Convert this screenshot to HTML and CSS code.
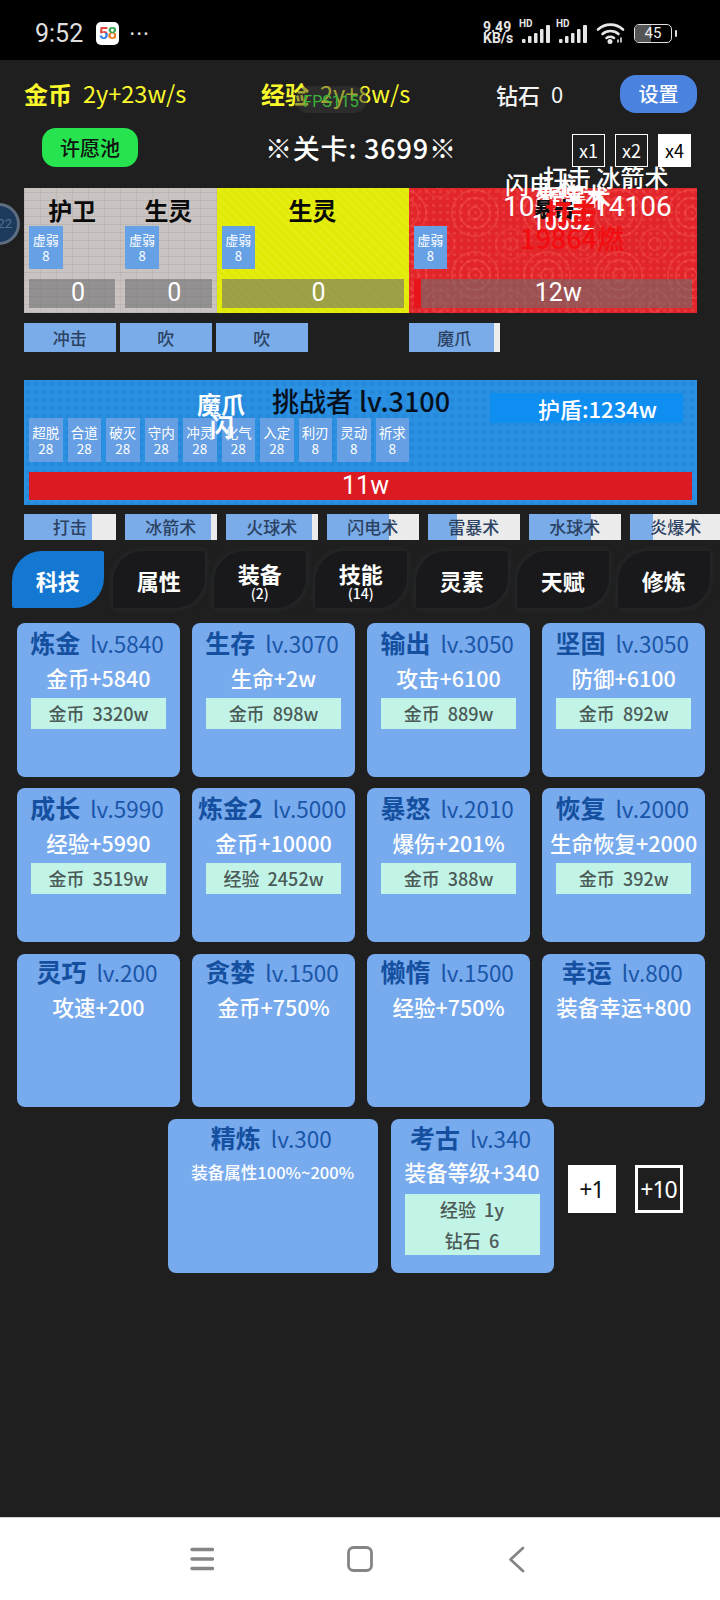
FILE: index.html
```html
<!DOCTYPE html>
<html lang="zh">
<head>
<meta charset="utf-8">
<title>科技</title>
<link rel="stylesheet" href="styles.css">
</head>
<body>
<div class="phone">
  <header class="status">
    <span class="time">9:52</span>
    <span class="app58"><span class="five">5</span><span class="eight">8</span></span>
    <span class="dots">•••</span>
    <span class="net">9.49<br>KB/s</span>
    <span class="sig"><span class="hd">HD</span>
      <svg width="30" height="19" viewBox="0 0 30 19"><g fill="#e6e6e6"><rect x="0" y="14" width="3.5" height="4" rx="1"/><rect x="6" y="11" width="3.5" height="7" rx="1"/><rect x="12" y="8" width="3.5" height="10" rx="1"/><rect x="18" y="4" width="3.5" height="14" rx="1"/><rect x="24" y="0" width="4" height="18" rx="1"/></g></svg>
    </span>
    <span class="sig"><span class="hd">HD</span>
      <svg width="30" height="19" viewBox="0 0 30 19"><g fill="#e6e6e6"><rect x="0" y="14" width="3.5" height="4" rx="1"/><rect x="6" y="11" width="3.5" height="7" rx="1"/><rect x="12" y="8" width="3.5" height="10" rx="1"/><rect x="18" y="4" width="3.5" height="14" rx="1"/><rect x="24" y="0" width="4" height="18" rx="1"/></g></svg>
    </span>
    <svg class="wifi" width="29" height="22" viewBox="0 0 29 22" fill="none" stroke="#e6e6e6" stroke-width="2.6" stroke-linecap="round"><path d="M2 7.5C9 1 20 1 27 7.5"/><path d="M6.5 12C11 8 18 8 22.500 12"/><path d="M10.500 16C12.500 14.500 16 14.500 18 16"/><circle cx="14" cy="19.500" r="1.200" fill="#e6e6e6"/><path d="M22 20v-2M25 20v-4" stroke-width="1.600"/></svg>
    <span class="batt"><span class="batt-fill"></span><span class="batt-num">45</span></span>
    <span class="batt-nub"></span>
  </header>

  <main class="game">
    <div class="res-row">
      <div class="res gold"><b>金币</b><span>2y+23w/s</span></div>
      <div class="res gold"><b>经验</b><span>2y+8w/s</span></div>
      <div class="res gem"><b>钻石</b><span>0</span></div>
      <button class="settings">设置</button>
      <div class="fps">FPS115</div>
    </div>

    <div class="stage-row">
      <button class="wish">许愿池</button>
      <div class="stage">※关卡: 3699※</div>
      <div class="speeds">
        <span class="speed">x1</span><span class="speed">x2</span><span class="speed on">x4</span>
      </div>
    </div>

    <div class="float-ball">22</div>

    <section class="team">
      <div class="zone brick">
        <div class="unit">
          <div class="u-name">护卫</div>
          <div class="buff">虚弱<br>8</div>
          <div class="hp">0</div>
        </div>
        <div class="unit">
          <div class="u-name">生灵</div>
          <div class="buff">虚弱<br>8</div>
          <div class="hp">0</div>
        </div>
      </div>
      <div class="zone lime">
        <div class="unit">
          <div class="u-name">生灵</div>
          <div class="buff">虚弱<br>8</div>
          <div class="hp">0</div>
        </div>
      </div>
      <div class="zone floral">
        <div class="unit">
          <div class="u-name"></div>
          <div class="buff">虚弱<br>8</div>
          <div class="hp hp-red"><i class="hp-sliver"></i><span>12w</span></div>
        </div>
      </div>
      <div class="dmg d1">打击 冰箭术</div>
      <div class="dmg d2">闪电术</div>
      <div class="dmg d3">火球术</div>
      <div class="dmg d4">雷暴术</div>
      <div class="dmg d5">10854</div>
      <div class="dmg d6">14106</div>
      <div class="dmg d8">暴击</div>
      <div class="dmg d7">10652</div>
      <div class="dmg d9">打击</div>
      <div class="dmg d10">19864燃</div>
    </section>

    <div class="team-skills">
      <div class="chip" style="--p:100%">冲击</div>
      <div class="chip" style="--p:100%">吹</div>
      <div class="chip" style="--p:100%">吹</div>
      <div class="chip" style="--p:93%">魔爪</div>
    </div>

    <section class="boss">
      <div class="boss-head">挑战者 lv.3100</div>
      <div class="shield">护盾:1234w</div>
      <div class="boss-buffs">
        <div class="debuff">超脱<br>28</div>
        <div class="debuff">合道<br>28</div>
        <div class="debuff">破灭<br>28</div>
        <div class="debuff">守内<br>28</div>
        <div class="debuff">冲灵<br>28</div>
        <div class="debuff">化气<br>28</div>
        <div class="debuff">入定<br>28</div>
        <div class="debuff">利刃<br>8</div>
        <div class="debuff">灵动<br>8</div>
        <div class="debuff">祈求<br>8</div>
      </div>
      <div class="boss-hp">11w</div>
      <div class="boss-float f1">魔爪</div>
      <div class="boss-float f2">闪</div>
    </section>

    <div class="boss-skills">
      <div class="chip" style="--p:74%">打击</div>
      <div class="chip" style="--p:94%">冰箭术</div>
      <div class="chip" style="--p:94%">火球术</div>
      <div class="chip" style="--p:67%">闪电术</div>
      <div class="chip" style="--p:31%">雷暴术</div>
      <div class="chip" style="--p:67%">水球术</div>
      <div class="chip" style="--p:25%">炎爆术</div>
    </div>

    <nav class="tabs">
      <div class="tab active">科技</div>
      <div class="tab">属性</div>
      <div class="tab">装备<small>(2)</small></div>
      <div class="tab">技能<small>(14)</small></div>
      <div class="tab">灵素</div>
      <div class="tab">天赋</div>
      <div class="tab">修炼</div>
    </nav>

    <section class="cards">
      <article class="card"><h3>炼金<span>lv.5840</span></h3><p>金币+5840</p><div class="cost"><div>金币&nbsp; 3320w</div></div></article>
      <article class="card"><h3>生存<span>lv.3070</span></h3><p>生命+2w</p><div class="cost"><div>金币&nbsp; 898w</div></div></article>
      <article class="card"><h3>输出<span>lv.3050</span></h3><p>攻击+6100</p><div class="cost"><div>金币&nbsp; 889w</div></div></article>
      <article class="card"><h3>坚固<span>lv.3050</span></h3><p>防御+6100</p><div class="cost"><div>金币&nbsp; 892w</div></div></article>

      <article class="card"><h3>成长<span>lv.5990</span></h3><p>经验+5990</p><div class="cost"><div>金币&nbsp; 3519w</div></div></article>
      <article class="card"><h3>炼金2<span>lv.5000</span></h3><p>金币+10000</p><div class="cost"><div>经验&nbsp; 2452w</div></div></article>
      <article class="card"><h3>暴怒<span>lv.2010</span></h3><p>爆伤+201%</p><div class="cost"><div>金币&nbsp; 388w</div></div></article>
      <article class="card"><h3>恢复<span>lv.2000</span></h3><p>生命恢复+2000</p><div class="cost"><div>金币&nbsp; 392w</div></div></article>

      <article class="card high"><h3>灵巧<span>lv.200</span></h3><p>攻速+200</p></article>
      <article class="card high"><h3>贪婪<span>lv.1500</span></h3><p>金币+750%</p></article>
      <article class="card high"><h3>懒惰<span>lv.1500</span></h3><p>经验+750%</p></article>
      <article class="card high"><h3>幸运<span>lv.800</span></h3><p>装备幸运+800</p></article>
    </section>

    <section class="last-row">
      <article class="card high wide"><h3>精炼<span>lv.300</span></h3><p class="small-effect">装备属性100%~200%</p></article>
      <article class="card high narrow"><h3>考古<span>lv.340</span></h3><p>装备等级+340</p><div class="cost tall"><div>经验&nbsp; 1y</div><div>钻石&nbsp; 6</div></div></article>
      <button class="step on">+1</button>
      <button class="step">+10</button>
    </section>
  </main>

  <footer class="navbar">
    <svg class="nav-menu" width="24" height="24" viewBox="0 0 24 24" stroke="#858585" stroke-width="3.400" stroke-linecap="round"><path d="M2 2.500H22.500M2 12H22.500M2 21.500H22.500"/></svg>
    <svg class="nav-home" width="26" height="26" viewBox="0 0 26 26" fill="none" stroke="#858585" stroke-width="2.800"><rect x="1.500" y="1.500" width="23" height="23" rx="5"/></svg>
    <svg class="nav-back" width="17" height="27" viewBox="0 0 17 27" fill="none" stroke="#858585" stroke-width="2.800" stroke-linecap="round" stroke-linejoin="round"><path d="M15 2L2.500 13.500L15 25"/></svg>
  </footer>
</div>
</body>
</html>
```

FILE: styles.css
```css
* { box-sizing: border-box; }
html, body { margin: 0; padding: 0; }
body {
  width: 720px;
  height: 1600px;
  overflow: hidden;
  background: #1f1f1f;
  font-family: "Noto Sans CJK SC", "Noto Sans", sans-serif;
}
.phone { width: 720px; height: 1600px; display: flex; flex-direction: column; overflow: hidden; }

/* status bar */
.status {
  height: 60px;
  flex: none;
  background: #000;
  color: #e4e4e4;
  display: flex;
  align-items: center;
  padding: 6px 0 0 35px;
}
.time { font: 400 25px/1 Roboto, sans-serif; color: #dedede; width: 61px; }
.app58 {
  width: 23px; height: 23px;
  background: #fff;
  border-radius: 5px;
  display: flex; align-items: center; justify-content: center;
  font: 700 17px/1 Roboto, sans-serif;
  letter-spacing: -1px;
}
.five, .eight { -webkit-background-clip: text; background-clip: text; color: transparent; }
.five { background-image: linear-gradient(180deg, #e5483c 0 45%, #2f7fe0 45%); }
.eight { background-image: linear-gradient(180deg, #35a853 0 45%, #ee7a22 45%); }
.dots { font: 400 13px/1 Roboto, sans-serif; letter-spacing: 2.500px; margin-left: 11px; width: 353px; color: #ddd; }
.net { font: 700 14px/11.500px Roboto, sans-serif; width: 36px; color: #e6e6e6; }
.sig { width: 37px; height: 22px; display: block; position: relative; }
.sig svg { display: block; margin: 3px 0 0 3px; }
.hd { position: absolute; left: 0; top: -3px; font: 700 10px/1 Roboto, sans-serif; color: #e6e6e6; }
.wifi { margin-left: 3px; }
.batt {
  margin-left: 9px;
  width: 38px; height: 19px;
  border: 1.500px solid #e0e0e0;
  border-radius: 5px;
  display: flex; align-items: center; justify-content: center;
  position: relative;
  overflow: hidden;
}
.batt-fill { position: absolute; left: 0; top: 0; bottom: 0; width: 45%; background: #555; }
.batt-num { position: relative; font: 400 15px/1 Roboto, sans-serif; color: #eee; }
.batt-nub { width: 2px; height: 7px; background: #ddd; margin-left: 3px; border-radius: 1px; }

/* game area */
.game { flex: 1; position: relative; background: #1f1f1f; }

.res-row {
  position: relative;
  display: grid;
  grid-template-columns: 237px 235px 124px 77px;
  align-items: center;
  height: 38px;
  margin-top: 15px;
  padding-left: 24px;
}
.res { display: flex; align-items: center; white-space: nowrap; }
.res b { font-size: 24px; font-weight: 700; line-height: 38px; }
.res span { font-size: 23.500px; margin-left: 11px; margin-top: -3px; }
.gold { color: #f8f82c; }
.gem { color: #f2f2f2; }
.gem b { font-size: 22px; font-weight: 500; }
.gem span { font-size: 22px; }
.settings {
  height: 38px;
  border: 0;
  border-radius: 16px;
  background: #4a82e0;
  color: #fff;
  font: 500 20px/1 "Noto Sans CJK SC", sans-serif;
  padding: 0;
}
.fps {
  position: absolute;
  left: 295px; top: 11px;
  width: 72px; height: 27px;
  border-radius: 14px;
  background: rgba(60, 60, 60, .45);
  color: #3cb43c;
  font: 400 16px/32px Roboto, sans-serif;
  text-align: center;
}

.stage-row {
  display: grid;
  grid-template-columns: 225px 186px 1fr;
  align-items: center;
  height: 39px;
  margin-top: 14px;
  padding-left: 42px;
}
.wish {
  width: 96px; height: 39px;
  border: 0; padding: 0;
  border-radius: 14px;
  background: #26e34f;
  color: #111;
  font: 500 20px/1 "Noto Sans CJK SC", sans-serif;
}
.stage { color: #fff; font-size: 27px; font-weight: 500; white-space: nowrap; line-height: 41px; letter-spacing: .8px; margin-left: -2px; }
.speeds { display: flex; justify-content: flex-end; gap: 10px; padding-right: 29px; padding-top: 6px; }
.speed {
  width: 33px; height: 33px;
  border: 1.500px solid #fff;
  color: #fff;
  font: 400 18px/30px "Noto Sans CJK SC", sans-serif;
  text-align: center;
}
.speed.on { background: #fff; color: #000; }

.float-ball {
  position: absolute;
  left: -22px; top: 143px;
  width: 42px; height: 42px;
  border-radius: 50%;
  background: #1c3a5c;
  border: 3px solid #5e6e80;
  color: #54708e;
  font: 400 13px/36px Roboto, sans-serif;
  text-align: right;
  padding-right: 5px;
}

/* party */
.team {
  position: relative;
  display: grid;
  grid-template-columns: 192.500px 192px 288.500px;
  height: 125px;
  margin: 22px 0 0 24px;
  width: 673px;
}
.zone { display: flex; }
.brick {
  background:
    repeating-linear-gradient(0deg, rgba(170,165,163,.4) 0 1px, transparent 1px 8px),
    repeating-linear-gradient(90deg, rgba(170,165,163,.3) 0 1px, transparent 1px 16px),
    #c9c4c2;
}
.lime {
  background: repeating-linear-gradient(45deg, #e1e906 0 3px, #e5ed10 3px 6px);
}
.floral {
  background:
    radial-gradient(circle, transparent 0 5px, rgba(255,110,100,.28) 5px 7px, transparent 7px 14px, rgba(255,110,100,.25) 14px 16px, transparent 16px 22px, rgba(255,110,100,.25) 22px 24px, transparent 24px) 30px -6px / 72px 62px,
    radial-gradient(circle, transparent 0 5px, rgba(255,110,100,.2) 5px 7px, transparent 7px 14px, rgba(255,110,100,.18) 14px 16px, transparent 16px) 66px 25px / 72px 62px,
    radial-gradient(circle, rgba(255,120,110,.22) 0 1.500px, transparent 2px) 0 0 / 7px 7px,
    #e2252a;
}
.unit { flex: 1; padding: 0 5px; display: flex; flex-direction: column; min-width: 0; }
.u-name {
  height: 38px;
  padding-top: 4px;
  text-align: center;
  color: #0a0a0a;
  font-size: 24px;
  font-weight: 700;
  line-height: 36px;
}
.buff {
  width: 33.500px; height: 43px;
  background: #66a1e6;
  color: #fff;
  font-size: 13px;
  line-height: 15.500px;
  text-align: center;
  padding-top: 6px;
}
.hp {
  margin-top: 10px;
  height: 28.500px;
  background: rgba(110, 110, 110, .6);
  color: #fff;
  font: 400 25px/28px Roboto, sans-serif;
  text-align: center;
  display: flex;
  justify-content: center;
  padding-left: 12px;
}
.hp-red { justify-content: flex-start; padding-left: 0; }
.hp-red span { flex: 1; padding-left: 4px; }
.hp-sliver { width: 7px; background: #e8141c; flex: none; }

.dmg { position: absolute; white-space: nowrap; font-weight: 500; color: #fff; }
.d1 { left: 519px; top: -29px; font-size: 24px; line-height: 36px; }
.d2 { left: 481px; top: -22px; font-size: 24px; line-height: 36px; }
.d3 { left: 510px; top: -11px; font-size: 24px; line-height: 36px; }
.d4 { left: 515px; top: -9px; font-size: 24px; line-height: 36px; }
.d5 { left: 479px; top: 1px; font: 400 28px/36px Roboto, sans-serif; }
.d6 { left: 569px; top: 1px; font: 400 28px/36px Roboto, sans-serif; }
.d7 { left: 508px; top: 20px; font: 500 22px/30px Roboto, sans-serif; }
.d8 { left: 510px; top: 3px; font-size: 20px; line-height: 36px; font-weight: 900; color: #0c0c0c; }
.d9 { left: 521px; top: 6px; font-size: 26px; line-height: 36px; font-weight: 900; color: #f01212; }
.d10 { left: 496px; top: 33px; font: 500 27px/34px "Noto Sans CJK SC", sans-serif; color: #f20c10; }

/* skill chips */
.team-skills {
  display: grid;
  grid-template-columns: 96px 96px 192.500px 92px;
  height: 29px;
  margin: 10px 0 0 24px;
}
.chip {
  width: 91.600px;
  flex: none;
  background: linear-gradient(90deg, #7aace9 0 var(--p), #ebebeb var(--p));
  color: #2c4263;
  font-size: 17px;
  font-weight: 500;
  line-height: 29px;
  text-align: center;
}
.boss-skills .chip { line-height: 26px; }
.boss-skills {
  display: flex;
  gap: 9.400px;
  height: 26px;
  margin: 9px 0 0 24px;
}

/* boss */
.boss {
  position: relative;
  width: 673px;
  height: 125px;
  margin: 28px 0 0 24px;
  padding: 0 5px;
  display: flex;
  flex-direction: column;
  background:
    radial-gradient(circle at 50% 50%, rgba(20,110,190,.22) 0 2px, transparent 3px) 0 0 / 8px 8px,
    #2a90e2;
}
.boss-head {
  height: 38px;
  padding-left: 243px;
  color: #06101c;
  font-size: 27px;
  font-weight: 500;
  line-height: 42px;
  white-space: nowrap;
}
.shield {
  position: absolute;
  left: 466px; top: 13px;
  width: 193px; height: 30px;
  background: #0f8ef2;
  color: #fff;
  font-size: 22px;
  font-weight: 500;
  line-height: 30px;
  text-align: center;
  padding-left: 22px;
}
.boss-buffs { display: flex; gap: 5px; height: 44px; }
.debuff {
  width: 33.500px;
  background: #669fe4;
  color: #fff;
  font-size: 13.500px;
  line-height: 16px;
  text-align: center;
  padding-top: 6px;
  white-space: nowrap;
  overflow: hidden;
}
.boss-hp {
  height: 28px;
  margin-top: 10px;
  padding-left: 10px;
  background: #dc1a22;
  color: #fff;
  font: 400 25px/27px Roboto, sans-serif;
  text-align: center;
}
.boss-float { position: absolute; color: #fff; font-size: 24px; font-weight: 700; line-height: 30px; white-space: nowrap; }
.f1 { left: 173px; top: 9px; }
.f2 { left: 186px; top: 31px; }

/* tabs */
.tabs {
  display: flex;
  gap: 9.500px;
  height: 57px;
  margin: 11px 0 0 12px;
}
.tab {
  width: 91.500px;
  flex: none;
  background: #19191b;
  border-radius: 30px 2px 30px 2px;
  box-shadow: 0 0 7px rgba(70, 90, 110, .25);
  color: #fff;
  font-size: 22px;
  font-weight: 700;
  line-height: 26px;
  display: flex;
  flex-direction: column;
  align-items: center;
  justify-content: center;
}
.tab small { font-size: 14px; font-weight: 500; line-height: 14px; }
.tab.active { background: #1478d2; box-shadow: none; }

/* cards */
.cards {
  display: grid;
  grid-template-columns: repeat(4, 163.500px);
  grid-auto-rows: 153.700px;
  column-gap: 11.600px;
  row-gap: 11.700px;
  margin: 15px 0 0 16.700px;
}
.card {
  background: #78aaee;
  border-radius: 8px;
  padding: 0 14px;
  text-align: center;
  overflow: hidden;
}
.card h3 {
  margin: 0 -14px;
  height: 36px;
  color: #14509f;
  font-size: 25px;
  font-weight: 700;
  line-height: 38px;
  white-space: nowrap;
  padding-right: 3px;
}
.card h3 span { font-size: 22.500px; font-weight: 400; margin-left: 10px; color: #1a56a8; }
.card.high h3 { height: 34px; line-height: 34px; }
.last-row .card.high h3 { line-height: 36px; }
.last-row .card.high p { line-height: 38px; }
.card.high .cost { margin-top: 2px; }
.card p {
  margin: 0 -14px;
  height: 39px;
  color: #fff;
  font-size: 21.500px;
  font-weight: 500;
  line-height: 37px;
  white-space: nowrap;
}
.cost { background: #c1f3e6; color: #4b5a56; font-size: 18px; font-weight: 500; line-height: 31px; }
.cost.tall { line-height: 30.500px; }

.last-row {
  display: flex;
  align-items: flex-start;
  height: 154px;
  margin: 11.700px 0 0 167.500px;
}
.wide { width: 210.500px; height: 154px; }
.narrow { width: 163px; height: 154px; margin-left: 12.500px; }
.card p.small-effect { font-size: 16.500px; height: 38px; }
.step {
  width: 48px; height: 48px;
  margin-top: 46px;
  margin-left: 19px;
  padding: 0;
  background: #1f1f1f;
  border: 3.500px solid #fff;
  color: #fff;
  font: 400 23px/1 "Noto Sans", sans-serif;
  letter-spacing: -1px;
}
.step.on { background: #fff; color: #111; margin-left: 14px; }

/* system nav */
.navbar {
  height: 83px;
  flex: none;
  background: #fff;
  border-top: 1px solid #cfcfcf;
  display: flex;
  align-items: flex-start;
  padding: 28px 0 0 190px;
}
.nav-menu { margin-top: 1px; }
.nav-home { margin-left: 133px; }
.nav-back { margin-left: 135px; }
```
